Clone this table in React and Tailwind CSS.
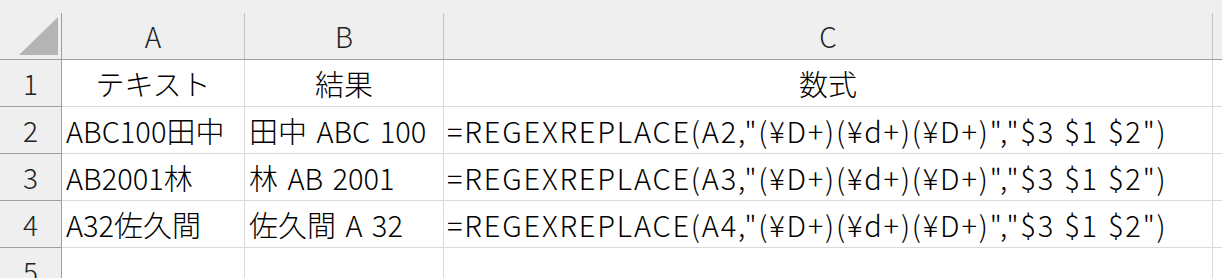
import React from "react";

const font = { fontFamily: '"Noto Sans CJK JP", "Noto Sans", sans-serif' };

const rows = [
  { n: "1", a: "テキスト", b: "結果", c: "数式", center: true },
  { n: "2", a: "ABC100田中", b: "田中 ABC 100", c: '=REGEXREPLACE(A2,"(¥D+)(¥d+)(¥D+)","$3 $1 $2")' },
  { n: "3", a: "AB2001林", b: "林 AB 2001", c: '=REGEXREPLACE(A3,"(¥D+)(¥d+)(¥D+)","$3 $1 $2")' },
  { n: "4", a: "A32佐久間", b: "佐久間 A 32", c: '=REGEXREPLACE(A4,"(¥D+)(¥d+)(¥D+)","$3 $1 $2")' },
  { n: "5", a: "", b: "", c: "" },
];

export default function App() {
  return (
    <div className="w-[1222px] h-[278px] overflow-hidden bg-white text-black font-light" style={font}>
      <div className="h-[13px] bg-[#efefef]" />
      <div className="flex h-[47px] bg-[#efefef] border-b border-[#9e9e9e] text-[28px] text-[#222]">
        <div className="w-[62px] shrink-0 border-r border-[#9e9e9e] relative">
          <svg width="61" height="46" className="absolute left-0 top-0">
            <polygon points="19,42 58,42 58,4" fill="#b4b4b4" />
          </svg>
        </div>
        <div className="w-[183px] shrink-0 border-r border-[#c4c4c4] flex items-center justify-center">A</div>
        <div className="w-[199px] shrink-0 border-r border-[#c4c4c4] flex items-center justify-center">B</div>
        <div className="w-[769px] shrink-0 border-r border-[#c4c4c4] flex items-center justify-center">C</div>
        <div className="flex-1" />
      </div>
      {rows.map((r) => (
        <div key={r.n} className="flex h-[47px] text-[29px] leading-none">
          <div className="w-[62px] shrink-0 bg-[#efefef] border-r border-b border-[#9e9e9e] flex items-center justify-center text-[28px] text-[#222]">
            {r.n}
          </div>
          <div className={`w-[183px] shrink-0 border-r border-b border-[#dadada] flex items-center whitespace-nowrap ${r.center ? "justify-center" : "pl-[4px]"}`}>
            {r.a}
          </div>
          <div className={`w-[199px] shrink-0 border-r border-b border-[#dadada] flex items-center whitespace-nowrap [word-spacing:3px] ${r.center ? "justify-center" : "pl-[4px]"}`}>
            {r.b}
          </div>
          <div className={`w-[769px] shrink-0 border-r border-b border-[#dadada] flex items-center whitespace-nowrap ${r.center ? "justify-center" : "pl-[3px] tracking-[1.8px] [word-spacing:1px]"}`}>
            {r.c}
          </div>
          <div className="flex-1 border-b border-[#dadada]" />
        </div>
      ))}
    </div>
  );
}
